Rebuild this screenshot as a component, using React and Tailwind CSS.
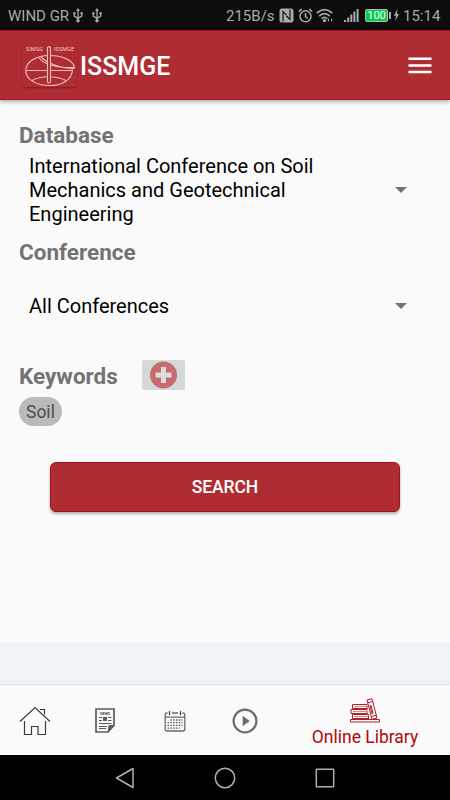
import React, { useState } from 'react';

const NAV_ITEMS = [
  { key: 'home', label: 'Home', Icon: HomeIcon },
  { key: 'news', label: 'News', Icon: NewsIcon },
  { key: 'events', label: 'Events', Icon: CalendarIcon },
  { key: 'media', label: 'Media', Icon: PlayIcon },
  { key: 'library', label: 'Online Library', Icon: BooksIcon },
];

function UsbIcon() {
  return (
    <svg width="10" height="15" viewBox="0 0 10 15" fill="none" stroke="#aaa" strokeWidth="1.3">
      <path d="M5 2v10M1.3 5.5v2.600L5 10.400M8.700 5.500v2.600L5 10.400" />
      <path d="M5 0l2 3H3zM.2 4.200h2.400v2H.2zM7.400 4.200h2.400v2H7.400z" fill="#aaa" stroke="none" />
      <circle cx="5" cy="12.700" r="1.700" fill="#aaa" stroke="none" />
    </svg>
  );
}

function StatusBar() {
  return (
    <div className="h-[30px] bg-[#0d0d0d] text-[#a9a9a9] text-[15px] leading-[30px] flex items-center justify-between pl-2 pr-2.5 whitespace-nowrap">
      <div className="flex items-center">
        <span className="w-[65px] pt-px">WIND GR</span>
        <UsbIcon />
        <span className="w-[9px]" />
        <UsbIcon />
      </div>
      <div className="flex items-center">
        <span className="w-[53px] pt-px text-[15px]">215B/s</span>
        <svg width="15" height="15" viewBox="0 0 15 15">
          <path d="M2.500 .5H12.500Q14.500 .5 14.500 3v9q0 2.500-2 2.500H2.500Q.5 14.500 .5 12V3Q.5 .5 2.500 .5z" fill="#aaa" />
          <path d="M4 13.500V3.500L7.500 7M11 1.500v10L7.500 8" fill="none" stroke="#0d0d0d" strokeWidth="1.100" />
        </svg>
        <svg className="ml-1" width="15" height="15" viewBox="0 0 15 15" fill="none" stroke="#aaa" strokeWidth="1.500">
          <circle cx="7.500" cy="8.300" r="5.500" />
          <path d="M7.500 5v3.700l2.300 1.600M.8 3.600L3.700 1M14.200 3.600L11.300 1" />
        </svg>
        <svg className="ml-[3px]" width="18" height="15" viewBox="0 0 18 15" fill="none" stroke="#aaa" strokeWidth="1.700">
          <path d="M.8 5Q8.500-1.800 16.200 5M3.200 8Q8.500 3.200 13.800 8M5.700 10.700Q8.500 8.200 11.300 10.700" />
          <circle cx="8.500" cy="12.600" r="1.700" fill="#aaa" stroke="none" />
          <path d="M11.500 12l1.500-2v4zM16.500 12L15 10v4z" fill="#aaa" stroke="none" />
        </svg>
        <svg className="ml-[10px]" width="15" height="15" viewBox="0 0 15 15" fill="#aaa">
          <path d="M0 12h2v2H0zM3.200 9.500h2V14h-2zM6.300 6.500h2V14h-2zM9.400 3.500h2V14h-2zM12.600 1h2v13h-2z" />
        </svg>
        <div className="ml-[6px] w-[23px] h-[13px] rounded-[2px] border border-[#b8b8b8] bg-[#05cb51] text-white text-[11px] leading-[11px] text-center">
          100
        </div>
        <div className="w-[2px] h-[7px] ml-px bg-[#aaa]" />
        <svg className="ml-[3px]" width="5" height="12" viewBox="0 0 5 12" fill="#aaa">
          <path d="M3.500 0L0 6.700h2L1.300 12 5 5H3z" />
        </svg>
        <span className="ml-[4px] pt-px w-[37px] text-[15px]">15:14</span>
      </div>
    </div>
  );
}

function Logo() {
  return (
    <div className="w-[55px] h-[42px] mt-[1px] rounded-[3px] bg-[#b02c33] shadow-[0_1px_2px_rgba(70,0,0,0.4)]">
      <svg width="55" height="42" viewBox="22 44 55 42" fill="none" stroke="#eebfc1" strokeWidth="1.100">
        <text x="26" y="50" fontSize="5.400" fill="#f2cfd0" stroke="none" textLength="17">SIMSG</text>
        <text x="54" y="50" fontSize="5.400" fill="#f2cfd0" stroke="none" textLength="20">ISSMGE</text>
        <path d="M74.600 66.500C73 59 62 54.500 49.500 54.500C36 54.500 25.800 61 25.800 69.500C25.800 78.500 36 84.500 49.500 84.500C62 84.500 72 79 72.500 68.500" />
        <path d="M26 69.500H72.500M39 57C45 64 58 67 74.600 66.500M41 56C47 62 60 67.500 74.600 67.500M32 79.500C41 74.500 56 74.500 66 79.500" />
        <path d="M47.500 81V46.500Q49 44.700 50.500 46.500V81Q49 83 47.500 81z" fill="#b02c33" />
      </svg>
    </div>
  );
}

function Header() {
  return (
    <header className="relative h-[70px] bg-[#b02c33] border-y border-[#a5101a] shadow-[0_2px_4px_rgba(0,0,0,0.3)] flex items-center pl-[22px] pr-[18px]">
      <Logo />
      <h1 className="ml-[3px] mt-[3px] text-white text-[25px] font-medium leading-none">ISSMGE</h1>
      <button type="button" aria-label="Menu" className="ml-auto w-[24px]">
        <svg width="24" height="17" viewBox="0 0 24 17" fill="#fff">
          <path d="M.5 .5h23v2.500H.5zM.5 7.200h23v2.500H.5zM.5 13.700h23v2.500H.5z" />
        </svg>
      </button>
    </header>
  );
}

function Picker({ value, className }) {
  return (
    <button type="button" className={`w-full pl-[10px] pr-[24px] flex items-center justify-between text-left text-black text-[20px] leading-6 ${className}`}>
      <span className="w-[310px]">{value}</span>
      <svg width="12" height="6" viewBox="0 0 12 6" fill="#737373">
        <path d="M0 0h12L6 6z" />
      </svg>
    </button>
  );
}

function SectionTitle({ children }) {
  return <h2 className="text-[#737373] text-[22.500px] font-bold leading-[26px]">{children}</h2>;
}

function HomeIcon() {
  return (
    <svg width="32" height="30" viewBox="0 0 32 30" fill="none" stroke="#3c3c3c" strokeWidth="1.200">
      <path d="M1 15.500L16 1.500L31 15.500" />
      <path d="M5.500 15v13.500h7V20.500h6.500v8h7.500V15M21 3.500h4.500v5" />
    </svg>
  );
}

function NewsIcon() {
  return (
    <svg width="20" height="25" viewBox="0 0 20 25" fill="none" stroke="#5c5c5c">
      <path d="M1 1h18v16.500L13 24H1z" strokeWidth="1.700" />
      <path d="M19 17.500h-5L13 24z" fill="#5c5c5c" />
      <text x="5" y="7" fontSize="4" fontWeight="700" fill="#5c5c5c" stroke="none" textLength="10">NEWS</text>
      <path d="M4 9.500h3M4 12.500h3M13 9.500H16.500M13 12.500H16.500M4 15.500h12.500M4 18.500h8M4 20.500h7" strokeWidth="1" />
      <path d="M8 9h4v4H8z" fill="#5c5c5c" stroke="none" />
    </svg>
  );
}

function CalendarIcon() {
  return (
    <svg width="22" height="22" viewBox="0 0 22 22" fill="none" stroke="#6b6b6b" strokeWidth="1.300">
      <path d="M3.500 3H3Q1.200 3 1.200 5v14q0 2 2 2h15.600q2 0 2-2V5q0-2-1.800-2h-.5M8 3h6M1 7.200h20" />
      <path d="M5.500 1v4M16.500 1v4" stroke="#444" />
      <path d="M6.500 10h12M3.500 12.700h15M3.500 15.400h15M3.500 18.100h12" stroke="#555" strokeDasharray="1.500 1.300" />
    </svg>
  );
}

function PlayIcon() {
  return (
    <svg width="26" height="26" viewBox="0 0 26 26">
      <circle cx="13" cy="13" r="11.400" fill="none" stroke="#6b6b6b" strokeWidth="2.200" />
      <path d="M10.700 7.700l7 5.300-7 5.300z" fill="#6b6b6b" />
    </svg>
  );
}

function BooksIcon() {
  return (
    <svg width="30" height="25" viewBox="0 0 30 25" fill="none" stroke="#b51e27" strokeWidth="1">
      <path d="M.5 21.500h29v2.500H.5z" />
      <path d="M17.500 6.500H2.500v4h15M17 7.500v2.500M17.500 11.500H1v4h16.500M17 12.500v2.500M19 16.500H2.500v4H19M18.500 17.500v2.500" />
      <path d="M4 8.500h13M3 13.500h13M4 18.500h14" strokeWidth=".5" />
      <path d="M17 2L22 .8 27 20 22 21.300zM17.600 4.700l5-1.200M21.300 18.500l5-1.300M20 7.500l1-.2 2 8.200-1 .2z" />
    </svg>
  );
}

function BottomNav({ active, onSelect }) {
  return (
    <nav className="h-[71px] bg-[#fafafa] border-t border-[#dce3e8] flex">
      {NAV_ITEMS.map(({ key, label, Icon }) => (
        <button
          key={key}
          type="button"
          aria-label={label}
          onClick={() => onSelect(key)}
          className={`flex flex-col items-center ${
            active === key ? 'w-[170px] pt-[13px] text-[#b00610]' : 'w-[70px] justify-center pt-px'
          }`}
        >
          <Icon />
          {active === key && <span className="mt-[3px] text-[17.500px] leading-[22px]">{label}</span>}
        </button>
      ))}
    </nav>
  );
}

function SystemNav() {
  return (
    <div className="h-[45px] bg-black flex items-center justify-center gap-[79px]">
      <svg width="20" height="22" viewBox="0 0 20 22" fill="none" stroke="#b0b0b0" strokeWidth="1.500">
        <path d="M18 1.500v19L1.500 11z" strokeLinejoin="round" />
      </svg>
      <svg width="22" height="22" viewBox="0 0 22 22" fill="none" stroke="#b0b0b0" strokeWidth="1.500">
        <circle cx="11" cy="11" r="9.700" />
      </svg>
      <svg width="20" height="20" viewBox="0 0 20 20" fill="none" stroke="#b0b0b0" strokeWidth="1.500">
        <rect x="1.300" y="1.300" width="17.400" height="17.400" rx="0.500" />
      </svg>
    </div>
  );
}

export default function App() {
  const [tab, setTab] = useState('library');
  const [keywords] = useState(['Soil']);

  return (
    <div className="w-[450px] h-[800px] flex flex-col overflow-hidden bg-[#fafafa] font-[Roboto,sans-serif]">
      <StatusBar />
      <Header />

      <main className="flex-1 px-[19px] pt-[22px]">
        <SectionTitle>Database</SectionTitle>
        <Picker
          value="International Conference on Soil Mechanics and Geotechnical Engineering"
          className="h-[72px] mt-[6px]"
        />
        <div className="mt-[13px]">
          <SectionTitle>Conference</SectionTitle>
        </div>
        <Picker value="All Conferences" className="h-[60px] mt-[11px]" />

        <div className="mt-[24px] h-[30px] flex items-start">
          <div className="w-[123px] pt-[3px]">
            <SectionTitle>Keywords</SectionTitle>
          </div>
          <button type="button" aria-label="Add keyword" className="w-[43px] h-[30px] rounded-[2px] bg-[#d6d8d8] flex items-center justify-center">
            <svg width="28" height="28" viewBox="0 0 28 28">
              <circle cx="13.500" cy="14" r="13.500" fill="#c66b70" />
              <path d="M11 6h5v5.500H21.500v5H16V22h-5v-5.500H5.500v-5h5.500z" fill="#dcdcdc" />
            </svg>
          </button>
        </div>

        <div className="mt-[7px] flex gap-2">
          {keywords.map(word => (
            <span key={word} className="h-[29px] px-[7px] rounded-full bg-[#bababa] text-[#4d4d4d] text-[17.500px] leading-[31px]">
              {word}
            </span>
          ))}
        </div>

        <button type="button" className="block mx-auto mt-[36px] w-[350px] h-[50px] pt-px rounded-[6px] bg-[#b02c33] border border-[#a5101a] text-white text-[17.500px] font-medium tracking-[-0.1px] shadow-[0_2px_3px_rgba(0,0,0,0.3)]">
          SEARCH
        </button>
      </main>

      <div className="h-[42px] bg-[#eff3f6]" />
      <BottomNav active={tab} onSelect={setTab} />
      <SystemNav />
    </div>
  );
}
